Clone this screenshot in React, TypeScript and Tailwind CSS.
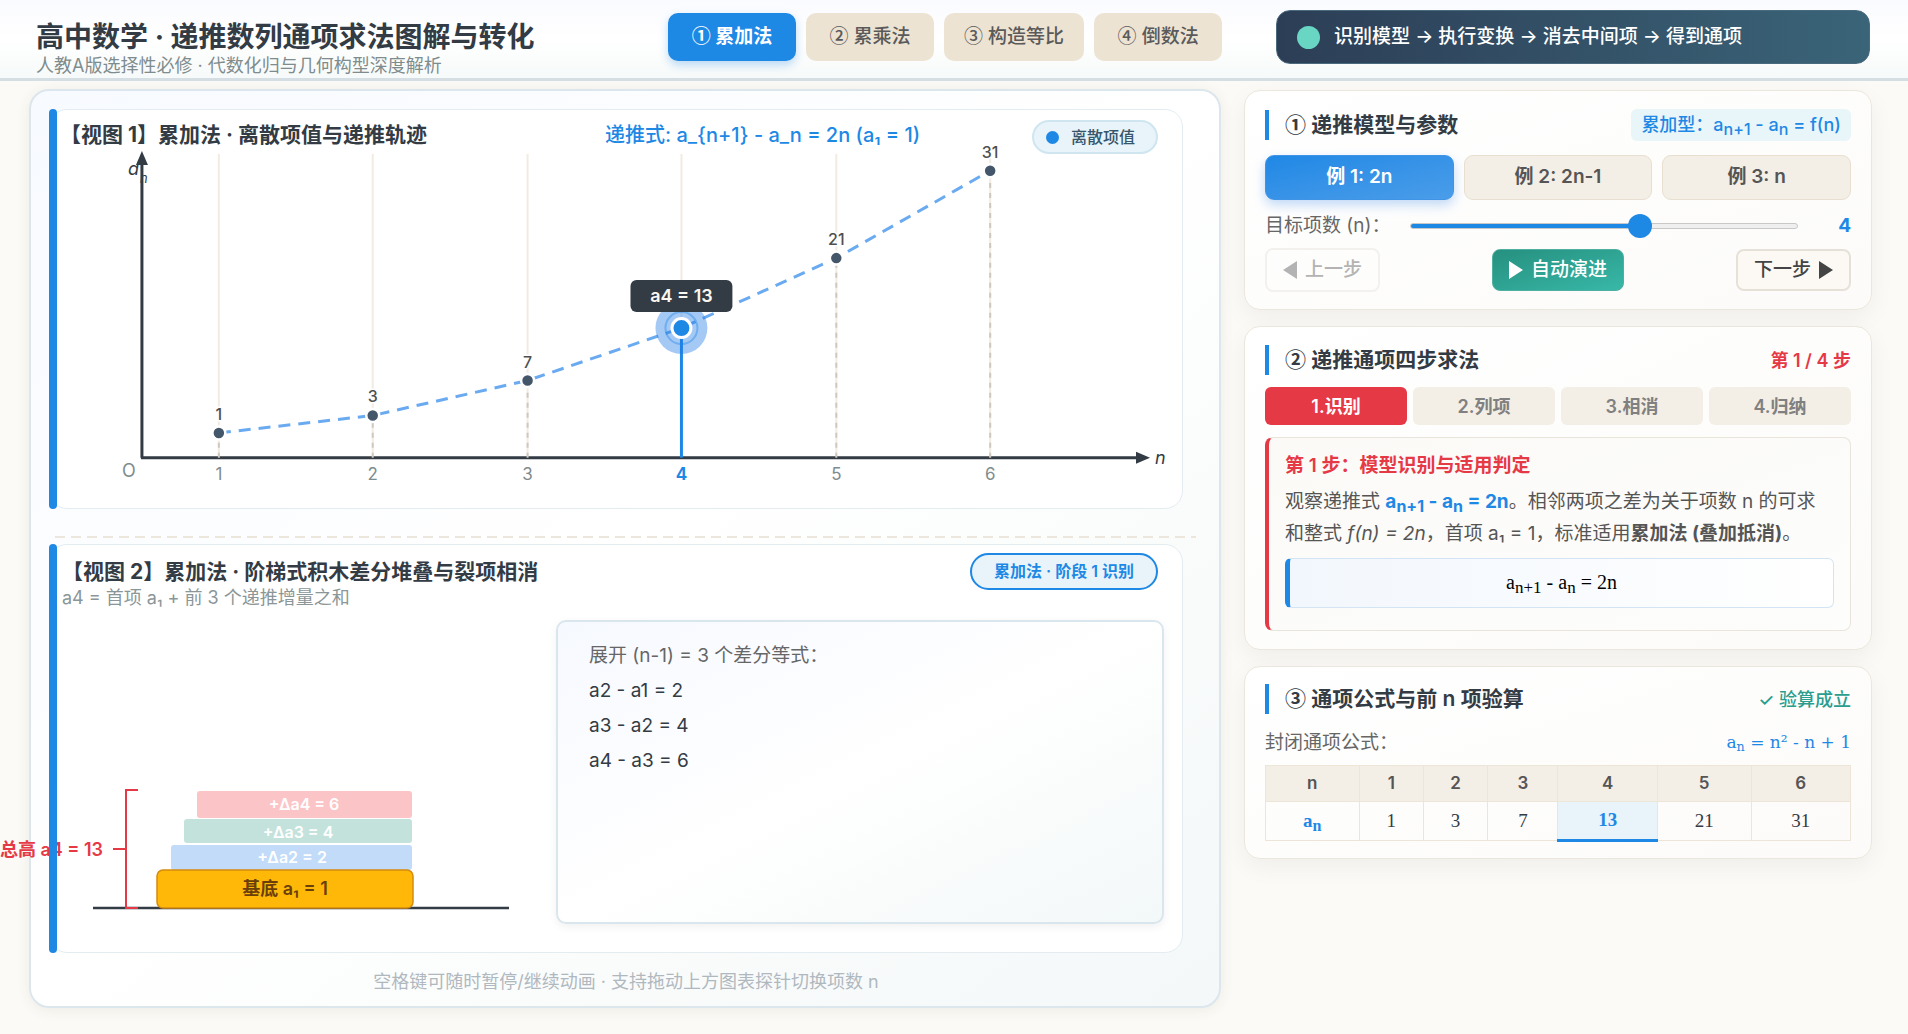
import { useState } from "react";
import type { ReactNode } from "react";

const SANS = "font-[Inter,'Noto_Sans_CJK_SC',sans-serif]";
const SERIF = "font-['Liberation_Serif','Noto_Sans_CJK_SC',serif]";

const methods = [
  ["①", "累加法"],
  ["②", "累乘法"],
  ["③", "构造等比"],
  ["④", "倒数法"],
];
const examples = ["例 1: 2n", "例 2: 2n-1", "例 3: n"];
const steps = ["1.识别", "2.列项", "3.相消", "4.归纳"];
const values = [1, 3, 7, 13, 21, 31];
const columnWidths = ["w-[16%]", "w-[11%]", "w-[11%]", "w-[12%]", "w-[17%]", "w-[16%]", "w-[17%]"];

const xAt = (n: number) => 169 + Math.round((n - 1) * 154.4);
const yAt = (v: number) => 332 - v * 8.75;

function Circled({ children }: { children: ReactNode }) {
  return <span className="font-['Noto_Sans_CJK_SC',sans-serif] leading-none">{children}</span>;
}

function Header() {
  const [active, setActive] = useState(0);
  return (
    <header className="flex h-[81px] items-start border-b-[3px] border-[#d5dee2] bg-linear-to-b from-[#fafbff] via-white to-[#f7fafa] pr-[38px] pl-9">
      <div className="w-[632px] shrink-0 pt-5">
        <h1 className="text-[28px] leading-[34px] font-bold text-[#333b44]">高中数学 · 递推数列通项求法图解与转化</h1>
        <p className="text-[18px] leading-6 text-[#7f8c8d]">人教A版选择性必修 · 代数化归与几何构型深度解析</p>
      </div>
      <nav className="flex shrink-0 gap-2.5 pt-[13px]">
        {methods.map(([mark, name], i) => (
          <button
            key={mark}
            type="button"
            onClick={() => setActive(i)}
            className={
              "h-12 min-w-32 rounded-[10px] px-5 text-[19px] " +
              (i === active
                ? "bg-[#1e88e5] font-bold text-white shadow-[0_4px_10px_rgba(30,136,229,0.3)]"
                : "bg-[#ede3d3] font-medium text-[#5a5a5a]")
            }
          >
            <Circled>{mark}</Circled> {name}
          </button>
        ))}
      </nav>
      <div className="mt-2.5 ml-[54px] flex h-[54px] grow items-center gap-3.5 rounded-[14px] border border-[#4a6b7e] bg-linear-to-r from-[#2c3e56] to-[#3a6478] pl-5">
        <span className="size-[23px] rounded-full bg-[#69d6c4]" />
        <span className="text-[19px] font-medium text-white">识别模型 → 执行变换 → 消去中间项 → 得到通项</span>
      </div>
    </header>
  );
}

function SequenceChart() {
  const path = values.map((v, i) => `${xAt(i + 1)},${yAt(v)}`).join(" ");
  return (
    <svg viewBox="0 0 1133 398" className="block w-full overflow-visible" role="img" aria-label="离散项值图">
      {values.map((v, i) => (
        <line key={v} x1={xAt(i + 1)} x2={xAt(i + 1)} y1="44" y2="348" stroke="#f2ebe2" strokeWidth="2" />
      ))}
      <line x1="92" x2="92" y1="50" y2="348" stroke="#333b44" strokeWidth="3" />
      <line x1="91" x2="1090" y1="348" y2="348" stroke="#333b44" strokeWidth="3" />
      <path d="M92 41 L98 55 H86 Z" fill="#333b44" />
      <path d="M1101 348 L1087 342 V354 Z" fill="#333b44" />
      <text x="78" y="65" fontSize="18" fontStyle="italic" fill="#333b44">a</text>
      <text x="90" y="73" fontSize="13" fontStyle="italic" fill="#333b44">n</text>
      <text x="1106" y="354" fontSize="18" fontStyle="italic" fill="#333b44">n</text>
      <text x="79" y="367" fontSize="18" textAnchor="middle" fill="#7f8c8d">O</text>
      {values.map((v, i) => (
        <line
          key={v}
          x1={xAt(i + 1)}
          x2={xAt(i + 1)}
          y1={348}
          y2={yAt(v)}
          stroke={i === 3 ? "#1e88e5" : "#cfc8bd"}
          strokeWidth={i === 3 ? 3 : 2}
          strokeDasharray={i === 3 ? undefined : "5 5"}
        />
      ))}
      <polyline points={path} fill="none" stroke="#6aaaf0" strokeWidth="3" strokeDasharray="12 8" />
      {values.map((v, i) => {
        const x = xAt(i + 1);
        const y = yAt(v);
        return i === 3 ? (
          <g key={v}>
            <circle cx={x} cy={y} r="26" fill="#1e78e5" opacity="0.4" />
            <circle cx={x} cy={y} r="16" fill="none" stroke="#1e88e5" strokeWidth="2" opacity="0.4" />
            <circle cx={x} cy={y} r="9.5" fill="#1e88e5" stroke="#fff" strokeWidth="3" />
            <rect x={x - 51} y={y - 48} width="102" height="32" rx="6" fill="#333b44" />
            <text x={x} y={y - 26} fontSize="18" fontWeight="600" textAnchor="middle" fill="#faf7f0">a4 = 13</text>
          </g>
        ) : (
          <g key={v}>
            <circle cx={x} cy={y} r="6.5" fill="#44566a" stroke="#fff" strokeWidth="2.5" />
            <text x={x} y={y - 13} fontSize="16" fontWeight="500" textAnchor="middle" fill="#4f4f4f" stroke="#fff" strokeWidth="3" paintOrder="stroke">{v}</text>
          </g>
        );
      })}
      {values.map((v, i) => (
        <text
          key={v}
          x={xAt(i + 1)}
          y="370"
          fontSize="17"
          fontWeight={i === 3 ? 700 : 400}
          textAnchor="middle"
          fill={i === 3 ? "#1e88e5" : "#7f8c8d"}
        >
          {i + 1}
        </text>
      ))}
    </svg>
  );
}

function StackDrawing() {
  return (
    <svg viewBox="0 0 480 140" className="block w-[480px] overflow-visible" role="img" aria-label="积木堆叠图">
      <line x1="35" x2="451" y1="130" y2="130" stroke="#333b44" strokeWidth="2.5" />
      <rect x="139" y="13" width="215" height="27" rx="3" fill="#fbc5c8" />
      <rect x="126" y="41" width="228" height="24" rx="3" fill="#c4e2dc" />
      <rect x="113" y="67" width="241" height="25" rx="3" fill="#c1dbf8" />
      <rect x="99" y="92" width="256" height="38" rx="6" fill="#ffb808" stroke="#d68a0c" strokeWidth="1.5" />
      <g fontWeight="600" textAnchor="middle" fontSize="16" fill="#fff">
        <text x="246" y="32">+Δa4 = 6</text>
        <text x="240" y="60">+Δa3 = 4</text>
        <text x="234" y="85">+Δa2 = 2</text>
      </g>
      <text x="227" y="117" fontSize="18" fontWeight="600" textAnchor="middle" fill="#6b3f0a">基底 a₁ = 1</text>
      <path d="M80 12 H68 V130 H80 M67 71 H55" fill="none" stroke="#e63946" strokeWidth="2" />
      <text x="45" y="78" fontSize="18" fontWeight="600" textAnchor="end" fill="#e63946">总高 a4 = 13</text>
    </svg>
  );
}

function ViewCard({ children }: { children: ReactNode }) {
  return (
    <section className="relative rounded-[18px] border border-[#e3edf1] bg-white">
      <span className="absolute -top-px -bottom-px -left-px w-2 rounded-full bg-[#1e88e5]" />
      {children}
    </section>
  );
}

function VisualPanel() {
  return (
    <main className="rounded-[20px] border-2 border-[#dce6ed] bg-linear-to-br from-[#f7faff] via-white to-[#f4f8f8] pt-[18px] pr-9 pl-[18px] shadow-[0_2px_14px_rgba(80,60,40,0.08)]">
      <ViewCard>
        <div className="absolute inset-x-0 top-0 flex h-[50px] items-center">
          <h2 className="w-[555px] pl-2.5 text-[21px] leading-7 font-bold text-[#333b44]">【视图 1】累加法 · 离散项值与递推轨迹</h2>
          <p className="grow text-[20px] font-medium text-[#1e88e5]">递推式: a_{"{"}n+1{"}"} - a_n = 2n (a₁ = 1)</p>
          <span className="mt-1 mr-6 flex h-[34px] w-[126px] items-center gap-3 rounded-full border-2 border-[#cfe6f0] bg-[#e8f3fa] pl-3 text-base font-medium text-[#35566b]">
            <i className="size-[13px] rounded-full bg-[#1e88e5]" />
            离散项值
          </span>
        </div>
        <SequenceChart />
      </ViewCard>
      <svg className="mt-[27px] mb-1.5 ml-1.5 block h-0.5 w-[calc(100%+7px)] overflow-visible" aria-hidden="true">
        <line x1="0" x2="100%" y1="1" y2="1" stroke="#ede6dc" strokeWidth="2" strokeDasharray="10 6" />
      </svg>
      <ViewCard>
        <div className="flex h-[407px] flex-col">
          <div className="flex justify-between pr-6 pl-3">
            <div className="pt-[13px]">
              <h2 className="text-[21px] leading-7 font-bold text-[#333b44]">【视图 2】累加法 · 阶梯式积木差分堆叠与裂项相消</h2>
              <p className="text-[18px] leading-6 text-[#8a9697]">a4 = 首项 a₁ + 前 3 个递推增量之和</p>
            </div>
            <span className="mt-2 flex h-[37px] items-center rounded-full border-2 border-[#1e88e5] bg-[#e8f3fa] px-[22px] text-base font-semibold text-[#1e88e5]">累加法 · 阶段 1 识别</span>
          </div>
          <div className="flex grow items-stretch gap-[18px] pt-2.5 pr-[18px] pb-7 pl-2">
            <div className="flex w-[480px] shrink-0 items-end pb-1.5">
              <StackDrawing />
            </div>
            <div className="grow rounded-[10px] border-2 border-[#dae6ed] bg-linear-to-br from-[#f6f9ff] via-white to-[#f3f8f8] px-[31px] pt-4 text-[19px] leading-[35px] text-[#333b44] shadow-[0_3px_8px_rgba(0,0,0,0.06)]">
              <p className="text-[#666]">展开 (n-1) = 3 个差分等式：</p>
              <p>a2 - a1 = 2</p>
              <p>a3 - a2 = 4</p>
              <p>a4 - a3 = 6</p>
            </div>
          </div>
        </div>
      </ViewCard>
      <p className="pt-4 pb-[11px] pl-5 text-center text-[18px] leading-[26px] text-[#b0b8bf]">空格键可随时暂停/继续动画 · 支持拖动上方图表探针切换项数 n</p>
    </main>
  );
}

function Card({ mark, title, aside, children, className = "" }: { mark: string; title: string; aside: ReactNode; children: ReactNode; className?: string }) {
  return (
    <section className={"rounded-2xl border border-[#ece7dc] bg-linear-to-br from-white to-[#fcfbf9] px-5 shadow-[0_8px_24px_rgba(0,0,0,0.05)] " + className}>
      <div className="flex items-center justify-between">
        <h2 className="border-l-4 border-[#1e88e5] pl-4 text-[21px] leading-[30px] font-semibold text-[#333b44]">
          <Circled>{mark}</Circled> {title}
        </h2>
        {aside}
      </div>
      {children}
    </section>
  );
}

function ParameterCard() {
  const [n, setN] = useState(4);
  return (
    <Card
      mark="①"
      title="递推模型与参数"
      className="pt-[18px] pb-[17px]"
      aside={
        <span className="h-8 rounded-md bg-[#e8f5f9] px-2.5 text-[18px] leading-8 font-medium text-[#1e88e5] [&_sub]:text-base">
          累加型：a<sub>n+1</sub> - a<sub>n</sub> = f(n)
        </span>
      }
    >
      <div className="mt-3.5 grid grid-cols-3 gap-2.5">
        {examples.map((e, i) => (
          <button
            key={e}
            type="button"
            className={
              "h-[45px] rounded-[9px] border text-[19px] font-semibold " +
              (i === 0
                ? "border-[#3f94e6] bg-linear-to-br from-[#1e88e5] to-[#4a9de9] text-white shadow-[0_5px_12px_rgba(30,120,229,0.28)]"
                : "border-[#e8dfd0] bg-[#f3eee6] text-[#555]")
            }
          >
            {e}
          </button>
        ))}
      </div>
      <div className="mt-3 flex h-7 items-center">
        <label htmlFor="terms" className="w-[145px] shrink-0 text-[19px] text-[#666]">目标项数 (n)：</label>
        <input
          id="terms"
          type="range"
          min={1}
          max={6}
          value={n}
          onChange={(e) => setN(Number(e.target.value))}
          className="h-1.5 min-w-0 grow appearance-none rounded-full border border-[#c8c8c8] bg-[#efefef] bg-linear-to-r from-[#1e88e5] from-60% to-[#efefef] to-60% [&::-webkit-slider-thumb]:size-6 [&::-webkit-slider-thumb]:appearance-none [&::-webkit-slider-thumb]:rounded-full [&::-webkit-slider-thumb]:bg-[#1e88e5]"
        />
        <output htmlFor="terms" className="w-[53px] text-right text-[19px] font-bold text-[#1e88e5]">{n}</output>
      </div>
      <div className="mt-2 flex h-11 items-center justify-between text-[19px] font-medium">
        <button type="button" disabled className="flex h-11 items-center gap-2 rounded-lg border-2 border-[#f2f1ee] px-4 text-[#b3b3b3]">
          <svg viewBox="0 0 14 18" className="h-[18px] w-3.5" aria-hidden="true"><path d="M14 0v18L0 9z" fill="currentColor" /></svg>
          上一步
        </button>
        <button type="button" className="flex h-[42px] items-center gap-2 rounded-lg border border-[#4fb0a2] bg-linear-to-br from-[#26907f] to-[#38b8a8] px-4 text-white">
          <svg viewBox="0 0 14 18" className="h-[18px] w-3.5" aria-hidden="true"><path d="M0 0v18L14 9z" fill="currentColor" /></svg>
          自动演进
        </button>
        <button type="button" className="flex h-[42px] items-center gap-2 rounded-lg border-2 border-[#e6e1d8] bg-[#fcf9f4] px-4 text-[#444]">
          下一步
          <svg viewBox="0 0 14 18" className="h-[18px] w-3.5" aria-hidden="true"><path d="M0 0v18L14 9z" fill="currentColor" /></svg>
        </button>
      </div>
    </Card>
  );
}

function StepsCard() {
  return (
    <Card
      mark="②"
      title="递推通项四步求法"
      className="pt-[18px] pb-[18px]"
      aside={<span className="text-[18px] font-semibold text-[#e63946]">第 1 / 4 步</span>}
    >
      <div className="mt-3 grid grid-cols-4 gap-1.5">
        {steps.map((s, i) => (
          <button
            key={s}
            type="button"
            className={"h-[38px] rounded-md text-[18px] font-semibold " + (i === 0 ? "bg-[#e63946] text-white" : "bg-[#f3eee6] text-[#808080]")}
          >
            {s}
          </button>
        ))}
      </div>
      <div className="mt-3 rounded-lg border border-l-4 border-[#eae5db] border-l-[#e63946] bg-linear-to-br from-[#fbfaf7] to-[#fdfdfc] px-4 pt-3 pb-[22px]">
        <h3 className="text-[19px] leading-8 font-semibold text-[#e63946]">第 1 步：模型识别与适用判定</h3>
        <p className="mt-1 pr-2 text-[19px] leading-8 text-[#555] [&_sub]:text-base [&_sub]:leading-none">
          观察递推式 <strong className="text-[#1e88e5]">a<sub>n+1</sub> - a<sub>n</sub> = 2n</strong>。相邻两项之差为关于项数 n 的可求和整式 <em>f(n) = 2n</em>，首项 a₁ = 1，标准适用<strong>累加法 (叠加抵消)</strong>。
        </p>
        <div className={"mt-2 h-[50px] rounded-md border border-l-[5px] border-[#d3e5f5] border-l-[#1e88e5] bg-linear-to-r from-[#f2f7fd] to-white text-center text-[20px] leading-[46px] text-black [&_sub]:text-[17px] " + SERIF}>
          a<sub>n+1</sub> - a<sub>n</sub> = 2n
        </div>
      </div>
    </Card>
  );
}

function FormulaCard() {
  return (
    <Card
      mark="③"
      title="通项公式与前 n 项验算"
      className="pt-[17px] pb-4"
      aside={<span className="text-[18px] font-medium text-[#2a9d8f]">✓ 验算成立</span>}
    >
      <div className="mt-[15px] flex h-7 items-center justify-between text-[19px] text-[#666]">
        <span>封闭通项公式：</span>
        <span className="font-['DejaVu_Serif',serif] text-[17px] text-[#1e88e5]">a<sub>n</sub> = n² - n + 1</span>
      </div>
      <table className="mt-2 w-full table-fixed border-collapse text-center">
        <thead>
          <tr className="h-9 bg-[#f3eee6] text-[17px] text-[#555]">
            {["n", 1, 2, 3, 4, 5, 6].map((h, i) => (
              <th key={h} scope="col" className={"border border-[#ece5d8] font-semibold " + columnWidths[i]}>{h}</th>
            ))}
          </tr>
        </thead>
        <tbody>
          <tr className={"h-[39px] text-[19px] text-[#333b44] " + SERIF}>
            <th scope="row" className="border border-[#ece5d8] font-bold text-[#1e88e5] [&_sub]:text-base">a<sub>n</sub></th>
            {values.map((v, i) => (
              <td key={v} className={"border border-[#ece5d8] " + (i === 3 ? "border-b-[3px] border-b-[#1e88e5] bg-[#e8f3fa] font-bold text-[#1e88e5]" : "")}>{v}</td>
            ))}
          </tr>
        </tbody>
      </table>
    </Card>
  );
}

export default function App() {
  return (
    <div lang="zh-CN" className={"min-h-screen bg-[#fbfaf6] " + SANS}>
      <Header />
      <div className="flex items-start gap-[23px] pt-2 pr-9 pb-6 pl-[29px]">
        <div className="min-w-0 grow"><VisualPanel /></div>
        <aside className="mt-px flex w-[628px] shrink-0 flex-col gap-4">
          <ParameterCard />
          <StepsCard />
          <FormulaCard />
        </aside>
      </div>
    </div>
  );
}
